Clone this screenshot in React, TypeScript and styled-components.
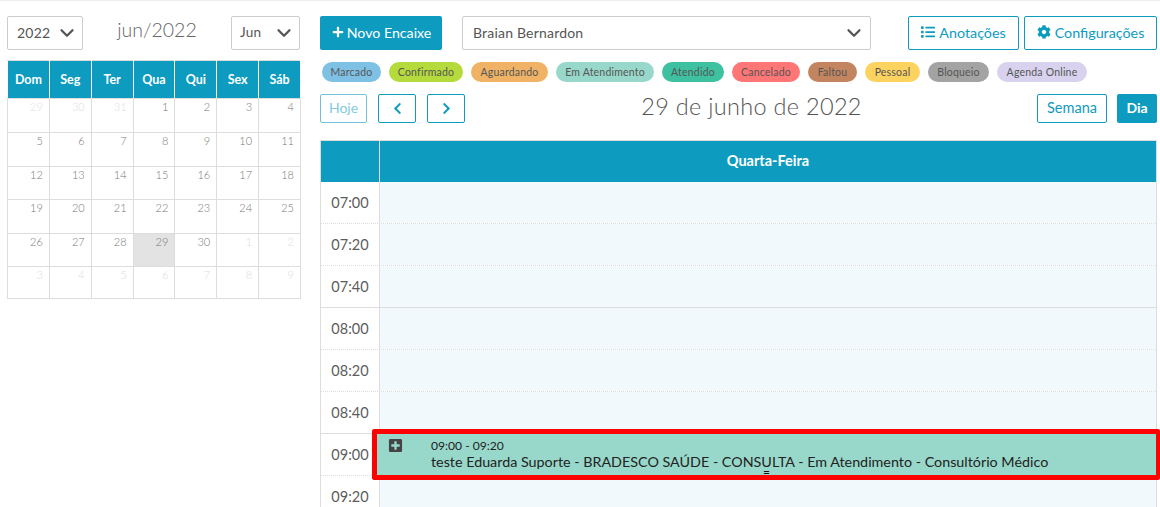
import React from "react";
import styled, { createGlobalStyle } from "styled-components";
import { FaChevronLeft, FaChevronRight, FaCog, FaList, FaPlus, FaPlusSquare } from "react-icons/fa";
import { ChevronDown } from "lucide-react";

const TEAL = "#0d9bbf";
const FONT = `Lato, "Open Sans", "Noto Sans", sans-serif`;

const WEEKDAYS = ["Dom", "Seg", "Ter", "Qua", "Qui", "Sex", "Sáb"];

const WEEKS = [
  { height: 34, days: [29, 30, 31, 1, 2, 3, 4] },
  { height: 34, days: [5, 6, 7, 8, 9, 10, 11] },
  { height: 33, days: [12, 13, 14, 15, 16, 17, 18] },
  { height: 34, days: [19, 20, 21, 22, 23, 24, 25] },
  { height: 33, days: [26, 27, 28, 29, 30, 1, 2] },
  { height: 32, days: [3, 4, 5, 6, 7, 8, 9] },
];

const LEGEND = [
  { label: "Marcado", color: "#7fc1e4", width: 59 },
  { label: "Confirmado", color: "#b5da3c", width: 74 },
  { label: "Aguardando", color: "#f0b366", width: 77 },
  { label: "Em Atendimento", color: "#98d8ca", width: 98 },
  { label: "Atendido", color: "#3dc1a0", width: 62 },
  { label: "Cancelado", color: "#ff7676", width: 68 },
  { label: "Faltou", color: "#c38560", width: 49 },
  { label: "Pessoal", color: "#fdd360", width: 55 },
  { label: "Bloqueio", color: "#a3a3a3", width: 61 },
  { label: "Agenda Online", color: "#d8d2ee", width: 90 },
];

const SLOTS = [
  { time: "07:00", solid: false },
  { time: "07:20", solid: false },
  { time: "07:40", solid: true },
  { time: "08:00", solid: false },
  { time: "08:20", solid: false },
  { time: "08:40", solid: true },
  { time: "09:00", solid: false },
  { time: "09:20", solid: false },
];

const isOutside = (week: number, day: number) =>
  (week === 0 && day > 20) || (week >= 4 && day < 10);

const App: React.FC = () => {
  return (
    <>
      <GlobalStyle />
      <Page>
        <Sidebar>
          <SidebarTop>
            <SelectBox $width={76}>
              <SelectValue>2022</SelectValue>
              <ChevronDown size={22} strokeWidth={2.5} />
            </SelectBox>
            <MonthTitle>jun/2022</MonthTitle>
            <SelectBox $width={69} $small>
              <SelectValue>Jun</SelectValue>
              <ChevronDown size={22} strokeWidth={2.5} />
            </SelectBox>
          </SidebarTop>
          <MiniCalendar>
            <thead>
              <tr>
                {WEEKDAYS.map((day) => (
                  <WeekdayCell key={day}>{day}</WeekdayCell>
                ))}
              </tr>
            </thead>
            <tbody>
              {WEEKS.map((week, w) => (
                <WeekRow key={w} $height={week.height}>
                  {week.days.map((day, d) => (
                    <DayCell
                      key={d}
                      $outside={isOutside(w, day)}
                      $today={w === 4 && day === 29}
                    >
                      {day}
                    </DayCell>
                  ))}
                </WeekRow>
              ))}
            </tbody>
          </MiniCalendar>
        </Sidebar>

        <Main>
          <Toolbar>
            <PrimaryButton>
              <FaPlus size={12} />
              Novo Encaixe
            </PrimaryButton>
            <DoctorSelect>
              <SelectValue>Braian Bernardon</SelectValue>
              <ChevronDown size={22} strokeWidth={2.5} />
            </DoctorSelect>
            <ToolbarActions>
              <OutlineButton $width={111}>
                <FaList size={14} />
                Anotações
              </OutlineButton>
              <OutlineButton $width={133}>
                <FaCog size={14} />
                Configurações
              </OutlineButton>
            </ToolbarActions>
          </Toolbar>

          <Legend>
            {LEGEND.map((item) => (
              <Pill key={item.label} $color={item.color} $width={item.width}>
                {item.label}
              </Pill>
            ))}
          </Legend>

          <NavRow>
            <NavGroup>
              <TodayButton>Hoje</TodayButton>
              <ArrowButton>
                <FaChevronLeft size={13} />
              </ArrowButton>
              <ArrowButton>
                <FaChevronRight size={13} />
              </ArrowButton>
            </NavGroup>
            <DateTitle>29 de junho de 2022</DateTitle>
            <ViewGroup>
              <WeekButton>Semana</WeekButton>
              <DayButton>Dia</DayButton>
            </ViewGroup>
          </NavRow>

          <Schedule>
            <ScheduleHead>
              <HeadCorner />
              <HeadDay>Quarta-Feira</HeadDay>
            </ScheduleHead>
            {SLOTS.map((slot) => (
              <SlotRow key={slot.time} $solid={slot.solid}>
                <SlotTime>{slot.time}</SlotTime>
                <SlotBody />
              </SlotRow>
            ))}
            <Highlight>
              <EventCard>
                <EventIcon>
                  <FaPlusSquare size={15} />
                </EventIcon>
                <EventText>
                  <EventTime>09:00 - 09:20</EventTime>
                  <EventTitle>
                    teste Eduarda Suporte - BRADESCO SAÚDE - CONSULTA - Em Atendimento - Consultório Médico
                  </EventTitle>
                </EventText>
                <ResizeHandle />
              </EventCard>
            </Highlight>
          </Schedule>
        </Main>
      </Page>
    </>
  );
};

export default App;

const GlobalStyle = createGlobalStyle`
  html, body {
    margin: 0;
    height: 100%;
    overflow: hidden;
    background: #fff;
  }
  body {
    font-family: ${FONT};
    color: #555;
  }
  * {
    box-sizing: border-box;
  }
`;

const Page = styled.div`
  display: flex;
  height: 507px;
  padding: 15px 3px 0 7px;
  gap: 19px;
  border-top: 1px solid #eee;
  overflow: hidden;
`;

const Sidebar = styled.aside`
  width: 294px;
  flex-shrink: 0;
`;

const SidebarTop = styled.div`
  display: flex;
  align-items: flex-start;
  justify-content: space-between;
  padding-right: 1px;
`;

const SelectBox = styled.div<{ $width: number; $small?: boolean }>`
  display: flex;
  align-items: center;
  justify-content: space-between;
  width: ${(p) => p.$width}px;
  height: 34px;
  padding: 0 4px 0 ${(p) => (p.$small ? 8 : 9)}px;
  border: 1px solid #ccc;
  border-radius: 2px;
  font-size: ${(p) => (p.$small ? 13.5 : 14)}px;
  color: #555;

  svg {
    color: #555;
  }
`;

const SelectValue = styled.span`
  letter-spacing: 0.2px;
  margin-bottom: 2px;
`;

const MonthTitle = styled.div`
  font-size: 19.5px;
  font-weight: 300;
  color: #666;
  line-height: 28px;
`;

const MiniCalendar = styled.table`
  width: 294px;
  margin-top: 10px;
  border-collapse: collapse;
  table-layout: fixed;
`;

const WeekdayCell = styled.th`
  height: 38px;
  padding: 0;
  background: ${TEAL};
  border: 1px solid #ddd;
  border-color: #ddd #fff;
  color: #fff;
  font-size: 12.5px;
  font-weight: 700;
  text-align: center;
`;

const WeekRow = styled.tr<{ $height: number }>`
  height: ${(p) => p.$height}px;
`;

const DayCell = styled.td<{ $outside: boolean; $today: boolean }>`
  padding: 1px 6px 0 0;
  vertical-align: top;
  text-align: right;
  border: 1px solid #ddd;
  font-size: 11px;
  font-weight: 300;
  line-height: 14px;
  color: ${(p) => (p.$outside ? "#ddd" : "#777")};
  background: ${(p) => (p.$today ? "#e3e3e3" : "transparent")};
`;

const Main = styled.main`
  flex: 1;
  min-width: 0;
`;

const Toolbar = styled.div`
  display: flex;
  align-items: center;
  height: 34px;
`;

const PrimaryButton = styled.button`
  display: flex;
  align-items: center;
  justify-content: center;
  gap: 3px;
  width: 122px;
  height: 34px;
  padding: 0 0 2px 1px;
  background: ${TEAL};
  border: 0;
  border-radius: 2px;
  color: #fff;
  font-family: ${FONT};
  font-size: 14.2px;
`;

const DoctorSelect = styled.div`
  display: flex;
  align-items: center;
  justify-content: space-between;
  width: 409px;
  height: 34px;
  margin-left: 20px;
  padding: 0 5px 0 10px;
  border: 1px solid #ccc;
  border-radius: 2px;
  font-size: 14px;
  color: #555;
`;

const ToolbarActions = styled.div`
  display: flex;
  gap: 5px;
  margin-left: 37px;
`;

const OutlineButton = styled.button<{ $width: number }>`
  display: flex;
  align-items: center;
  justify-content: center;
  gap: 4px;
  width: ${(p) => p.$width}px;
  height: 34px;
  padding: 0 0 2px;
  background: #fff;
  border: 1px solid ${TEAL};
  border-radius: 2px;
  color: ${TEAL};
  font-family: ${FONT};
  font-size: 14.3px;
`;

const Legend = styled.div`
  display: flex;
  gap: 8px;
  margin-top: 12px;
  padding-left: 2px;
`;

const Pill = styled.span<{ $color: string; $width: number }>`
  display: flex;
  align-items: center;
  justify-content: center;
  width: ${(p) => p.$width}px;
  height: 20px;
  padding-bottom: 1px;
  border-radius: 10px;
  background: ${(p) => p.$color};
  color: #555;
  font-size: 10.5px;
  letter-spacing: 0.2px;
  white-space: nowrap;
`;

const NavRow = styled.div`
  display: flex;
  align-items: center;
  justify-content: space-between;
  height: 29px;
  margin-top: 12px;
`;

const NavGroup = styled.div`
  display: flex;
  gap: 11px;
`;

const TodayButton = styled.button`
  width: 47px;
  height: 29px;
  padding: 0 0 2px;
  background: #fff;
  border: 1px solid #6fc3d9;
  border-radius: 2px;
  color: #7fcbe0;
  font-family: ${FONT};
  font-size: 14px;
`;

const ArrowButton = styled.button`
  display: flex;
  align-items: center;
  justify-content: center;
  width: 38px;
  height: 29px;
  padding: 0;
  background: #fff;
  border: 1px solid ${TEAL};
  border-radius: 2px;
  color: ${TEAL};
`;

const DateTitle = styled.h2`
  margin: 0 0 6px 1px;
  font-size: 23.5px;
  font-weight: 300;
  color: #555;
  letter-spacing: 0.3px;
`;

const ViewGroup = styled.div`
  display: flex;
  gap: 10px;
`;

const WeekButton = styled.button`
  width: 70px;
  height: 29px;
  padding: 0 0 3px;
  background: #fff;
  border: 1px solid ${TEAL};
  border-radius: 2px;
  color: ${TEAL};
  font-family: ${FONT};
  font-size: 14.5px;
`;

const DayButton = styled.button`
  width: 40px;
  height: 29px;
  padding: 0 0 2px;
  background: ${TEAL};
  border: 0;
  border-radius: 2px;
  color: #fff;
  font-family: ${FONT};
  font-size: 14px;
  font-weight: 700;
`;

const Schedule = styled.section`
  position: relative;
  margin-top: 17px;
  border: 1px solid #ddd;
  border-bottom: 0;
`;

const ScheduleHead = styled.div`
  display: flex;
  height: 41px;
  background: ${TEAL};
`;

const HeadCorner = styled.div`
  width: 59px;
  border-right: 1px solid #ddd;
`;

const HeadDay = styled.div`
  flex: 1;
  display: flex;
  align-items: center;
  justify-content: center;
  padding-bottom: 2px;
  color: #fff;
  font-size: 14.5px;
  font-weight: 700;
`;

const SlotRow = styled.div<{ $solid: boolean }>`
  display: flex;
  height: 42px;
  border-bottom: 1px ${(p) => (p.$solid ? "solid" : "dotted")} #ddd;
`;

const SlotTime = styled.div`
  display: flex;
  align-items: center;
  justify-content: center;
  width: 59px;
  border-right: 1px solid #ddd;
  font-size: 14.5px;
  color: #5c5c5c;
`;

const SlotBody = styled.div`
  flex: 1;
  background: #f2f9fc;
`;

const Highlight = styled.div`
  position: absolute;
  top: 288px;
  left: 51px;
  right: -4px;
  height: 51px;
  border: 5px solid #ff0000;
  border-right-width: 4px;
  border-radius: 2px;
`;

const EventCard = styled.div`
  position: relative;
  display: flex;
  height: 100%;
  background: #98d8ca;
  color: #222;
`;

const EventIcon = styled.span`
  display: flex;
  width: 54px;
  padding: 4px 0 0 11px;
  color: #444;
`;

const EventText = styled.div`
  display: flex;
  flex-direction: column;
  padding-top: 4px;
`;

const EventTime = styled.span`
  font-size: 12.1px;
  line-height: 15px;
`;

const EventTitle = styled.span`
  font-size: 14.32px;
  line-height: 18px;
  white-space: nowrap;
`;

const ResizeHandle = styled.span`
  position: absolute;
  left: 386px;
  bottom: 0;
  font-size: 12px;
  line-height: 6px;
  color: #111;

  &::after {
    content: "=";
  }
`;
